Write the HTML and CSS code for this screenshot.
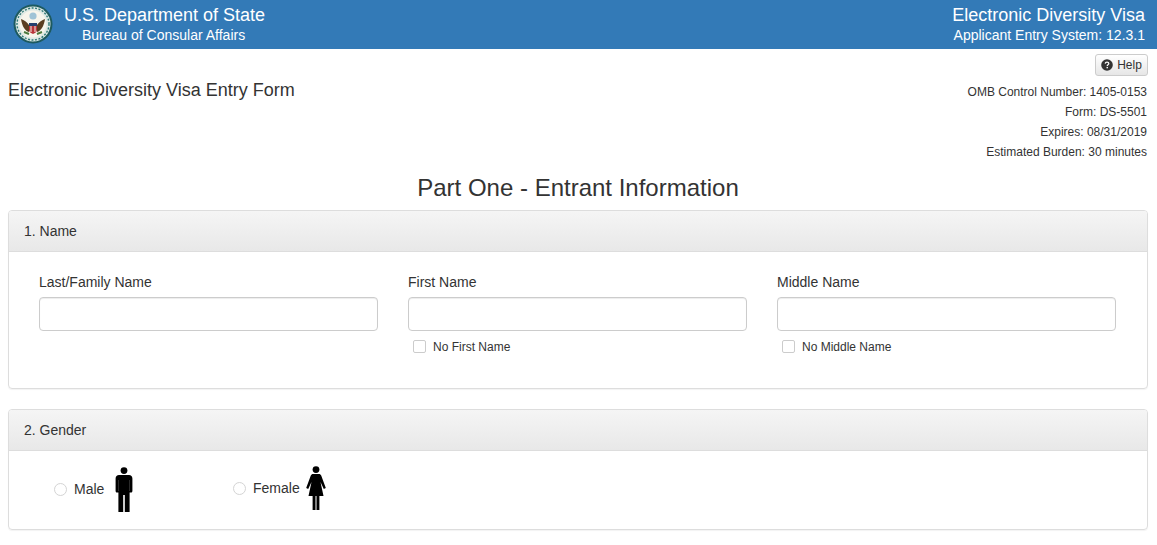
FILE: index.html
```html
<!DOCTYPE html>
<html lang="en">
<head>
<meta charset="utf-8">
<title>Electronic Diversity Visa Entry Form</title>
<link rel="stylesheet" href="styles.css">
</head>
<body>
<header class="topbar">
  <div class="brand">
    <svg class="seal" viewBox="0 0 40 40" aria-hidden="true">
      <circle cx="20" cy="20" r="19.5" fill="#1d5a5f"/>
      <circle cx="20" cy="20" r="17.5" fill="#dfe9e4"/>
      <circle cx="20" cy="20" r="16" fill="none" stroke="#2f7a78" stroke-width="1.4" stroke-dasharray="2 1.5"/>
      <circle cx="20" cy="20" r="13.5" fill="#f7f5ec"/>
      <circle cx="20" cy="12" r="3.6" fill="#9fc3d6"/>
      <path d="M8 15c3 1 6 3 8 6v7c-4-1-7-6-8-13zM32 15c-3 1-6 3-8 6v7c4-1 7-6 8-13z" fill="#5a3d20"/>
      <path d="M16 19h8v7c0 2-2 3-4 4-2-1-4-2-4-4z" fill="#b8343a"/>
      <path d="M16 19h8v3h-8z" fill="#24406e"/>
      <path d="M18 22v6M22 22v6" stroke="#f4f0e6" stroke-width="1"/>
      <path d="M11 28l5 2M29 28l-5 2" stroke="#4c7a3f" stroke-width="2"/>
    </svg>
    <div class="brand-text">
      <div class="brand-main">U.S. Department of State</div>
      <div class="brand-sub">Bureau of Consular Affairs</div>
    </div>
  </div>
  <div class="system">
    <div class="system-main">Electronic Diversity Visa</div>
    <div class="system-sub">Applicant Entry System: 12.3.1</div>
  </div>
</header>

<main class="page">
  <div class="intro">
    <h1 class="form-title">Electronic Diversity Visa Entry Form</h1>
    <div class="meta">
      <button class="help" type="button">
        <svg class="help-icon" viewBox="0 0 12 12" aria-hidden="true">
          <circle cx="6" cy="6" r="5.8" fill="#333"/>
          <path d="M4.2 4.6c.1-1 .9-1.5 1.8-1.5 1 0 1.8.6 1.8 1.5 0 1.2-1.500 1.200-1.500 2.300" fill="none" stroke="#f5f5f5" stroke-width="1.3"/>
          <rect x="5.500" y="7.900" width="1.500" height="1.400" fill="#f5f5f5"/>
        </svg>
        Help
      </button>
      <p>OMB Control Number: 1405-0153</p>
      <p>Form: DS-5501</p>
      <p>Expires: 08/31/2019</p>
      <p>Estimated Burden: 30 minutes</p>
    </div>
  </div>

  <h2 class="part">Part One - Entrant Information</h2>

  <section class="panel panel-name">
    <div class="panel-heading">1. Name</div>
    <div class="name-grid">
      <div class="field">
        <label class="field-label">Last/Family Name</label>
        <input class="text-input" type="text">
      </div>
      <div class="field">
        <label class="field-label">First Name</label>
        <input class="text-input" type="text">
        <label class="check"><span class="box"></span><span class="check-text">No First Name</span></label>
      </div>
      <div class="field">
        <label class="field-label">Middle Name</label>
        <input class="text-input" type="text">
        <label class="check"><span class="box"></span><span class="check-text">No Middle Name</span></label>
      </div>
    </div>
  </section>

  <section class="panel">
    <div class="panel-heading">2. Gender</div>
    <div class="gender-row">
      <div class="gender gender-male">
        <span class="radio"></span><span class="gender-text">Male</span>
        <svg class="figure" viewBox="0 0 18 46" aria-hidden="true">
          <circle cx="9" cy="3.600" r="3.400" fill="#000"/>
          <path d="M4 8h10c2 0 3.400 1.400 3.400 3.400V24c0 .9-.5 1.500-1.300 1.500h-1.500V45H9.800V28H8.200v17H3.400V25.500H1.900c-.8 0-1.300-.6-1.300-1.500V11.400C.6 9.400 2 8 4 8z" fill="#000"/>
          <path d="M3.500 13v11M14.500 13v11" stroke="#555" stroke-width=".5"/>
        </svg>
      </div>
      <div class="gender gender-female">
        <span class="radio"></span><span class="gender-text">Female</span>
        <svg class="figure" viewBox="0 0 20 44" aria-hidden="true">
          <circle cx="10" cy="3.600" r="3.400" fill="#000"/>
          <path d="M7 8h6c1 0 1.800.6 2.200 1.600L19.800 22l-2 1-3.300-7 3 14h-4.100v14h-2.900V30h-1v14H6.600V30H2.500l3-14-3.300 7-2-1L4.800 9.600C5.200 8.600 6 8 7 8z" fill="#000"/>
        </svg>
      </div>
    </div>
  </section>
</main>
</body>
</html>
```
FILE: styles.css
```css
* { box-sizing: border-box; }
html, body { margin: 0; padding: 0; }
body {
  background: #fff;
  color: #333;
  font-family: "Liberation Sans", Arial, sans-serif;
  font-size: 14px;
  height: 545px;
  overflow: hidden;
}
.topbar {
  height: 49px;
  background: #337ab7;
  color: #fff;
  display: flex;
  justify-content: space-between;
  padding: 0 12px 0 13px;
}
.brand { display: flex; align-items: flex-start; }
.seal { width: 40px; height: 40px; margin-top: 4px; flex: none; }
.brand-text { margin-left: 11px; }
.brand-main { font-size: 18px; line-height: 20px; margin-top: 5px; }
.brand-sub { font-size: 14px; line-height: 16px; margin-top: 2px; padding-left: 18px; }
.system { text-align: right; }
.system-main { font-size: 18px; line-height: 20px; margin-top: 5px; }
.system-sub { font-size: 14px; line-height: 16px; margin-top: 2px; }
.page { padding: 5px 9px 0 8px; }
.intro { display: flex; justify-content: space-between; align-items: flex-start; }
.form-title { font-size: 18px; font-weight: 400; line-height: 20px; margin: 26px 0 0; }
.meta { text-align: right; font-size: 12px; display: flex; flex-direction: column; align-items: flex-end; }
.meta p { margin: 0; line-height: 20px; padding-right: 1px; }
.help {
  height: 22px;
  width: 53px;
  padding: 0;
  margin-bottom: 6px;
  background: linear-gradient(#fff, #e6e6e6);
  border: 1px solid #ccc;
  border-radius: 3px;
  color: #333;
  font: 12px "Liberation Sans", Arial, sans-serif;
  display: flex;
  align-items: center;
  justify-content: center;
  gap: 4px;
}
.help-icon { width: 12px; height: 12px; }
.part {
  font-size: 24px;
  font-weight: 400;
  line-height: 26px;
  text-align: center;
  margin: 13px 0 9px;
}
.panel {
  border: 1px solid #ddd;
  border-radius: 4px;
  box-shadow: 0 1px 1px rgba(0,0,0,.05);
  margin-bottom: 20px;
}
.panel-heading {
  height: 41px;
  padding: 0 15px;
  line-height: 40px;
  background: linear-gradient(#f5f5f5, #e8e8e8);
  border-bottom: 1px solid #ddd;
  border-radius: 3px 3px 0 0;
}
.panel-name { height: 179px; }
.name-grid {
  display: grid;
  grid-template-columns: repeat(3, 339px);
  column-gap: 30px;
  padding: 21px 0 0 30px;
}
.field-label { display: block; line-height: 18px; }
.text-input {
  display: block;
  width: 100%;
  height: 34px;
  margin-top: 6px;
  border: 1px solid #ccc;
  border-radius: 4px;
  background: #fff;
  box-shadow: inset 0 1px 1px rgba(0,0,0,.075);
}
.check { display: flex; align-items: center; font-size: 12px; margin-top: 8px; line-height: 14px; padding-left: 5px; }
.check-text { padding-top: 1px; }
.box {
  width: 13px;
  height: 13px;
  border: 1px solid #ccc;
  border-radius: 2px;
  margin-right: 7px;
  background: #fff;
}
.gender-row { display: flex; height: 78px; }
.gender { display: flex; align-items: flex-start; }
.radio {
  width: 13px;
  height: 13px;
  border: 1px solid #d4d4d4;
  border-radius: 50%;
  background: #fff;
}
.gender-text { line-height: 16px; margin-left: 7px; }
.figure { display: block; }
.gender-male { padding: 16px 0 0 45px; width: 224px; }
.gender-male .radio { margin-top: 16px; }
.gender-male .gender-text { margin-top: 14px; }
.gender-male .figure { width: 18px; height: 46px; margin-left: 11px; }
.gender-female .radio { margin-top: 31px; }
.gender-female .gender-text { margin-top: 29px; }
.gender-female { padding-top: 0; }
.gender-female .figure { width: 20px; height: 44px; margin: 15px 0 0 6px; }
```
